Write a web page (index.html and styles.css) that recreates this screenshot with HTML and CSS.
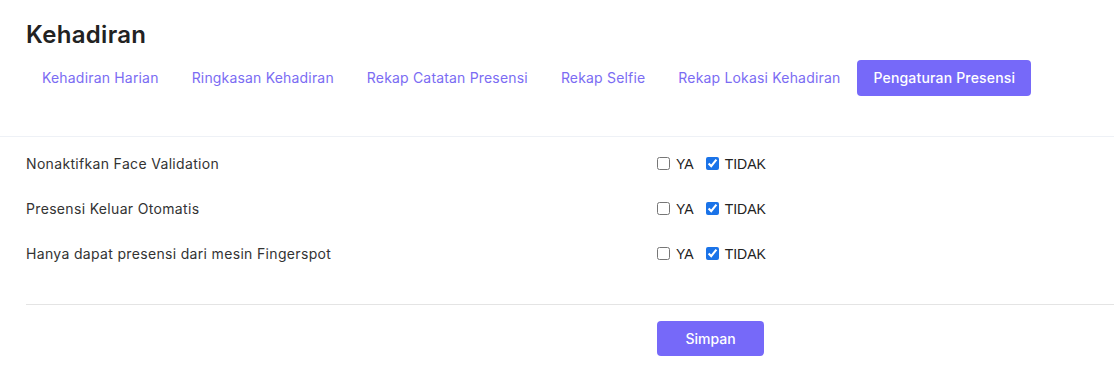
FILE: index.html
```html
<!DOCTYPE html>
<html lang="en">
<head>
    <meta charset="UTF-8">
    <title>Kehadiran</title>
    <link rel="stylesheet" href="styles.css">
</head>
<body>
    <div class="header">
        <h1>Kehadiran</h1>
        <div class="tabs">
            <a class="tab">Kehadiran Harian</a>
            <a class="tab">Ringkasan Kehadiran</a>
            <a class="tab">Rekap Catatan Presensi</a>
            <a class="tab">Rekap Selfie</a>
            <a class="tab">Rekap Lokasi Kehadiran</a>
            <a class="tab active">Pengaturan Presensi</a>
        </div>
    </div>
    <div class="settings">
        <div class="row">
            <div class="label">Nonaktifkan Face Validation</div>
            <div class="options">
                <label><input type="checkbox"> YA</label>
                <label><input type="checkbox" checked> TIDAK</label>
            </div>
        </div>
        <div class="row">
            <div class="label">Presensi Keluar Otomatis</div>
            <div class="options">
                <label><input type="checkbox"> YA</label>
                <label><input type="checkbox" checked> TIDAK</label>
            </div>
        </div>
        <div class="row">
            <div class="label">Hanya dapat presensi dari mesin Fingerspot</div>
            <div class="options">
                <label><input type="checkbox"> YA</label>
                <label><input type="checkbox" checked> TIDAK</label>
            </div>
        </div>
    </div>
    <div class="footer">
        <div class="spacer"></div>
        <button class="save">Simpan</button>
    </div>
</body>
</html>
```

FILE: styles.css
```css
body {
    margin: 0;
    font-family: Inter, "Noto Sans", sans-serif;
    background-color: #fff;
    color: #333;
}
.header {
    padding: 20px 26px 0;
    border-bottom: 1px solid #eef1f6;
    height: 116px;
}
h1 {
    margin: 0;
    font-size: 24px;
    font-weight: 600;
    line-height: 30px;
    letter-spacing: 0.3px;
    color: #222;
}
.tabs {
    display: flex;
    margin-top: 10px;
    gap: 1px;
}
.tab {
    display: block;
    padding: 0 16px;
    height: 36px;
    line-height: 36px;
    font-size: 14px;
    letter-spacing: 0.18px;
    color: #7b6cf3;
    border-radius: 4px;
    cursor: pointer;
}
.tab.active {
    background-color: #7669f9;
    color: #fff;
    font-weight: 500;
}
.settings {
    padding: 4px 0 0 26px;
}
.row {
    display: flex;
    align-items: center;
    height: 45px;
}
.label {
    width: 631px;
    font-size: 14px;
    letter-spacing: 0.33px;
    color: #333;
}
.options {
    display: flex;
    gap: 12px;
    font-family: "Liberation Sans", Arial, sans-serif;
    font-size: 14px;
    color: #222;
}
.options label {
    display: flex;
    align-items: center;
}
.options input {
    width: 13px;
    height: 13px;
    margin: 0 6px 0 0;
    accent-color: #1a73e8;
}
.footer {
    margin: 28px 0 0 26px;
    border-top: 1px solid #e4e4e4;
    padding-top: 16px;
    display: flex;
}
.spacer {
    width: 631px;
}
.save {
    width: 107px;
    height: 35px;
    border: none;
    border-radius: 4px;
    background-color: #7669f9;
    color: #fff;
    font-family: Inter, "Noto Sans", sans-serif;
    font-size: 14px;
    font-weight: 500;
    cursor: pointer;
}
```
